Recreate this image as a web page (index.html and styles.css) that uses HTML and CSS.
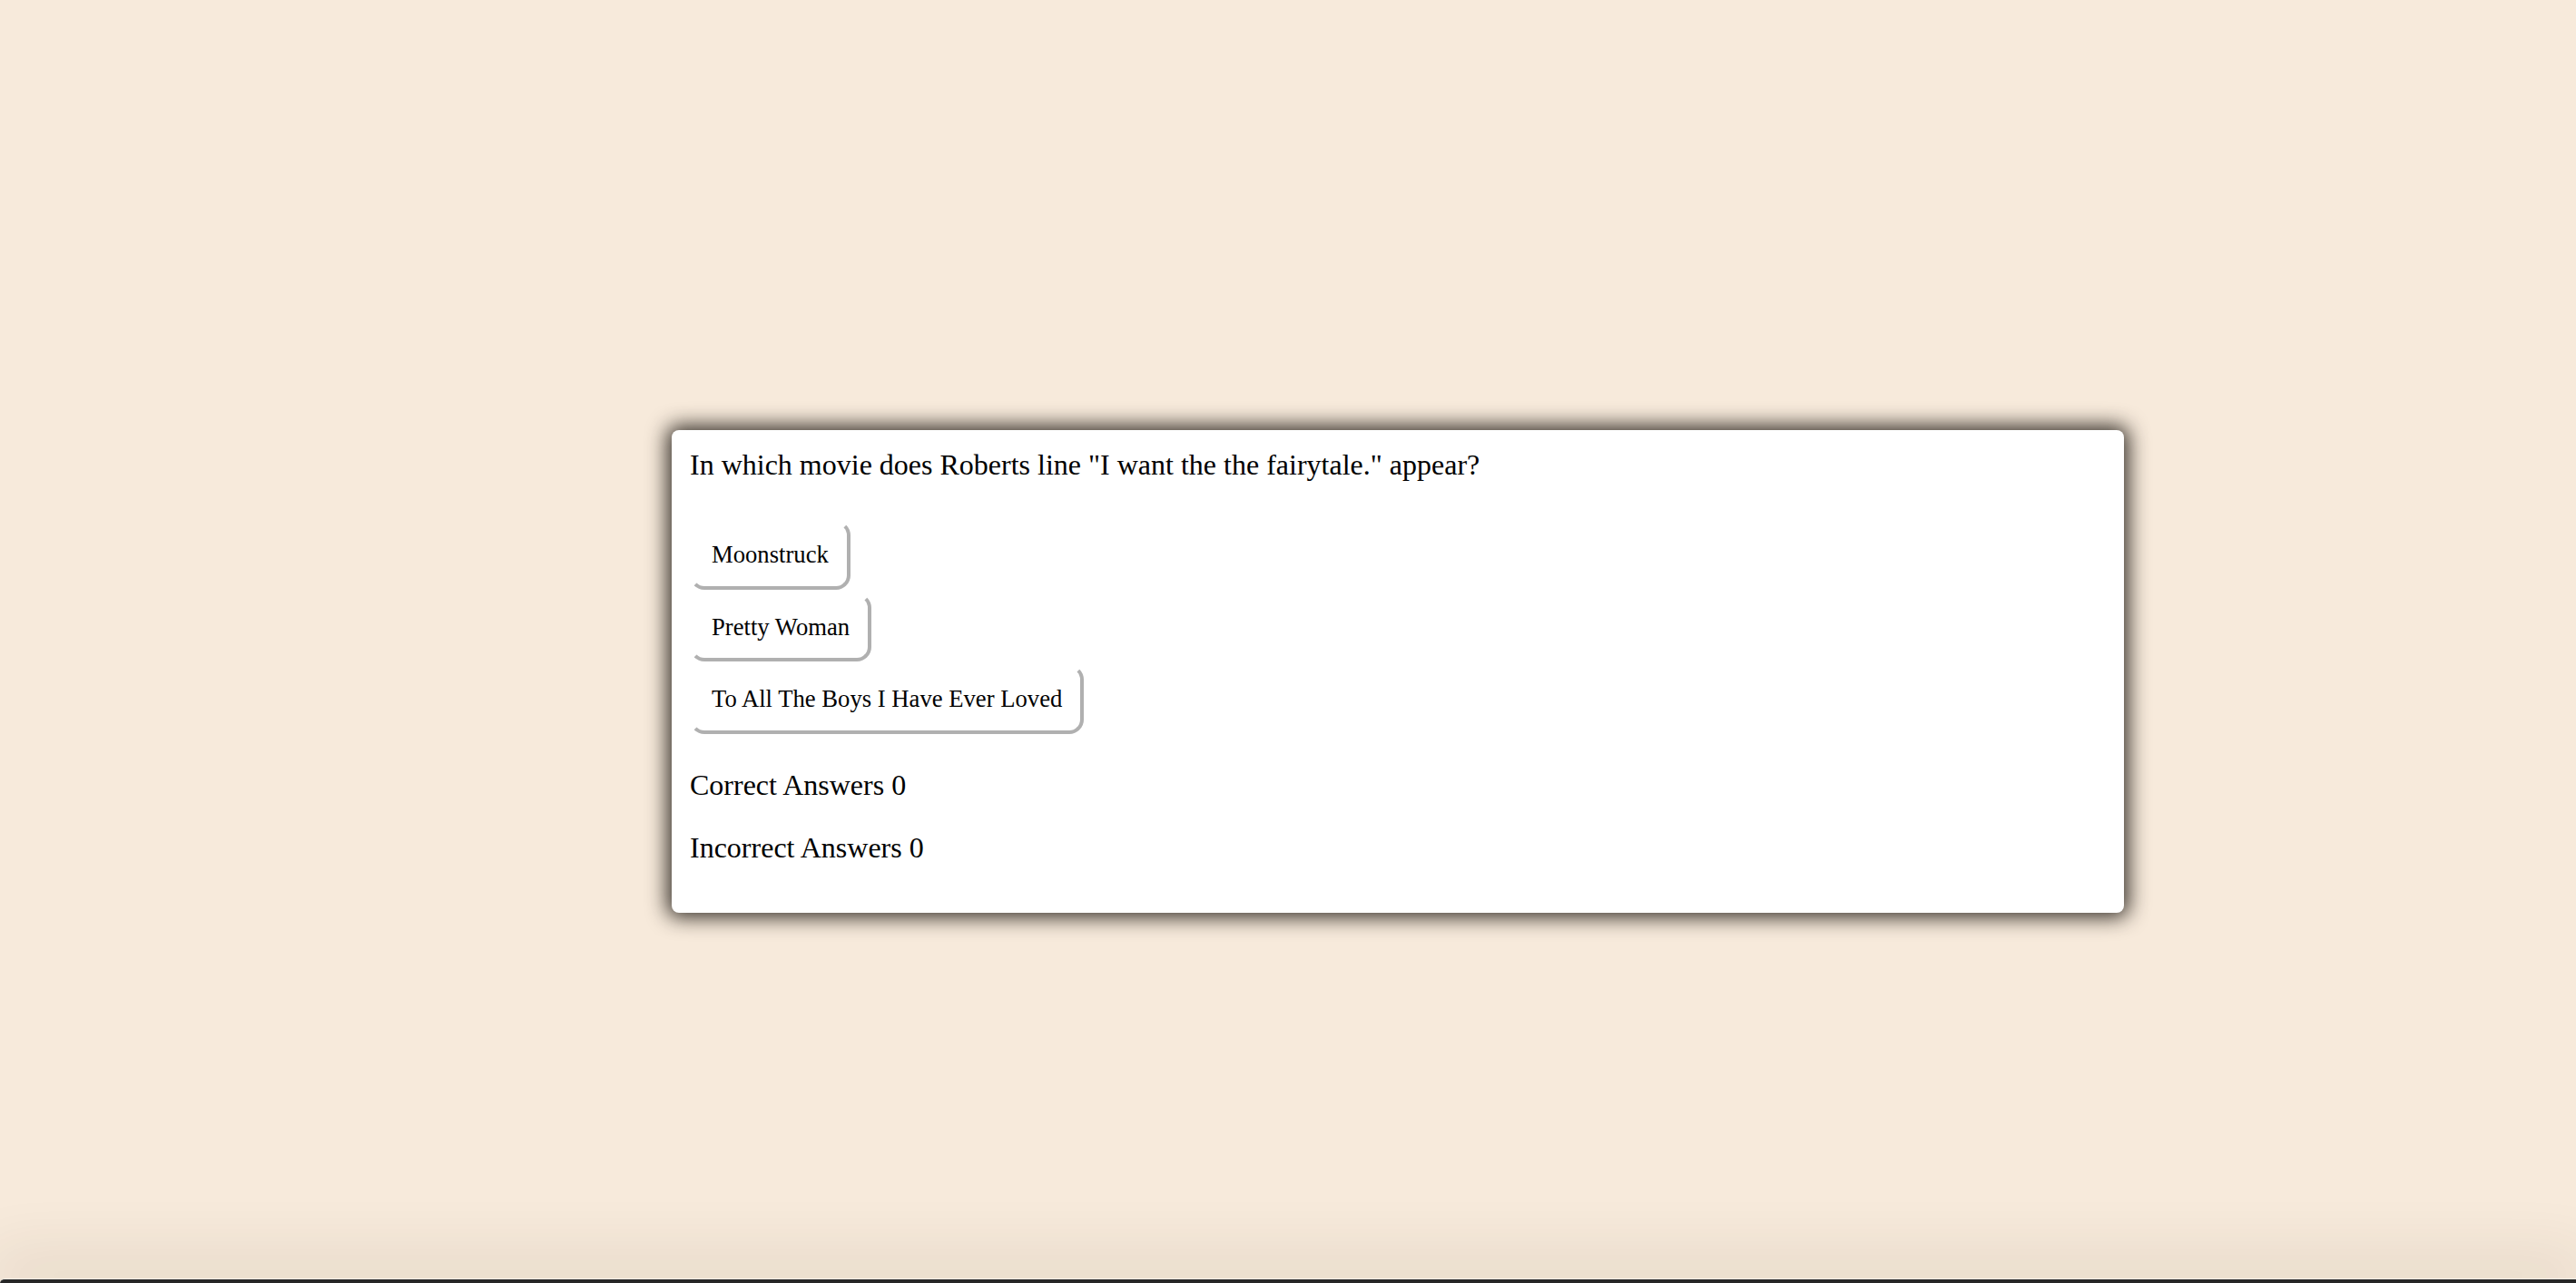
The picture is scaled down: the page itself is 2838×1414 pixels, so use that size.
FILE: index.html
```html
<!DOCTYPE html>
<html lang="en">
<head>
<meta charset="utf-8">
<title>Movie Quiz</title>
<link rel="stylesheet" href="styles.css">
</head>
<body>
  <main class="stage">
    <section class="card">
      <div class="question">In which movie does Roberts line "I want the the fairytale." appear?</div>
      <div class="answers">
        <button class="answer">Moonstruck</button>
        <button class="answer">Pretty Woman</button>
        <button class="answer">To All The Boys I Have Ever Loved</button>
      </div>
      <p class="stat stat-first">Correct Answers 0</p>
      <p class="stat">Incorrect Answers 0</p>
    </section>
  </main>
  <div class="window-edge"></div>
</body>
</html>
```

FILE: styles.css
```css
html, body {
  margin: 0;
  padding: 0;
}

body {
  background: #f7eadb;
  min-height: 100vh;
  display: flex;
  flex-direction: column;
  font-family: "Liberation Serif", "Times New Roman", serif;
  color: #000;
  overflow: hidden;
}

.stage {
  padding: 474px 0 0 740px;
}

.card {
  box-sizing: border-box;
  width: 1600px;
  background: #fff;
  border-radius: 8px;
  padding: 20px 20px 21px 20px;
  box-shadow: 0 0 22px 5px rgba(20, 15, 10, 0.85);
}

.question {
  font-size: 32px;
  line-height: 37px;
}

.answers {
  margin-top: 43px;
  display: flex;
  flex-direction: column;
  align-items: flex-start;
  gap: 4px;
}

.answer {
  font-family: "Liberation Serif", "Times New Roman", serif;
  font-size: 26.67px;
  line-height: 30.6px;
  color: #000;
  background: #fff;
  padding: 18px 20px 19px 20px;
  border: 4px solid;
  border-color: transparent #b0b0b0 #b0b0b0 transparent;
  border-radius: 16px;
  margin: 0;
  cursor: pointer;
}

.stat {
  font-size: 32px;
  line-height: 37px;
  margin: 32px 0 32px 0;
}

.stat-first {
  margin-top: 38px;
}

.stat + .stat {
  margin-top: 0;
}

.window-edge {
  margin-top: auto;
  height: 4px;
  background: #262626;
  border-top: 1px solid #f3efe8;
  border-top-left-radius: 10px;
  box-shadow: 0 -6px 70px 14px rgba(60, 40, 10, 0.14);
}
```
